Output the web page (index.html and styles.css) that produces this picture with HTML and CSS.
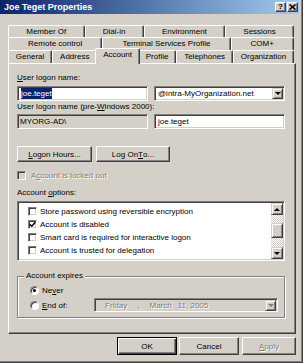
FILE: index.html
```html
<!DOCTYPE html>
<html lang="en">
<head>
    <meta charset="UTF-8" />
    <title>Joe Teget Properties</title>
    <link rel="stylesheet" href="styles.css">
</head>
<body>
<div class="window">
    <div class="titlebar">
        <span class="title">Joe Teget Properties</span>
        <div class="title-btns">
            <span class="tbtn">?</span>
            <span class="tbtn">
                <svg width="7" height="6" viewBox="0 0 7 6"><path d="M0.5 0.5 L6.5 5.5 M6.5 0.5 L0.5 5.5" stroke="#000" stroke-width="1.6"/></svg>
            </span>
        </div>
    </div>

    <div class="main">
        <div class="tabs">
            <div class="tab-row back">
                <div class="tab">Member Of</div>
                <div class="tab">Dial-in</div>
                <div class="tab">Environment</div>
                <div class="tab">Sessions</div>
            </div>
            <div class="tab-row">
                <div class="tab">Remote control</div>
                <div class="tab">Terminal Services Profile</div>
                <div class="tab">COM+</div>
            </div>
            <div class="tab-row">
                <div class="tab">General</div>
                <div class="tab">Address</div>
                <div class="tab selected">Account</div>
                <div class="tab">Profile</div>
                <div class="tab">Telephones</div>
                <div class="tab">Organization</div>
            </div>
        </div>

        <div class="panel">
            <div class="label"><u>U</u>ser logon name:</div>
            <div class="field-row">
                <div class="field"><span class="sel">joe.teget</span></div>
                <div class="field combo">
                    <span class="value">@intra-MyOrganization.net</span>
                    <span class="drop"><i class="arrow-down"></i></span>
                </div>
            </div>

            <div class="label label-2">User logon name (pre-<u>W</u>indows 2000):</div>
            <div class="field-row row-2">
                <div class="field readonly">MYORG-AD\</div>
                <div class="field">joe.teget</div>
            </div>

            <div class="button-row">
                <button class="btn hours"><u>L</u>ogon Hours...</button>
                <button class="btn logon">Log On <u>T</u>o...</button>
            </div>

            <div class="check-line disabled"><span class="checkbox"></span>A<u>c</u>count is locked out</div>

            <div class="label options-label">Account <u>o</u>ptions:</div>
            <div class="listbox">
                <div class="list-view">
                    <div class="item"><span class="checkbox"></span>Store password using reversible encryption</div>
                    <div class="item"><span class="checkbox"><svg width="7" height="7" viewBox="0 0 7 7"><path d="M0.8 3.2 L2.8 5.2 L6.3 1.2" fill="none" stroke="#000" stroke-width="1.5"/></svg></span>Account is disabled</div>
                    <div class="item"><span class="checkbox"></span>Smart card is required for interactive logon</div>
                    <div class="item"><span class="checkbox"></span>Account is trusted for delegation</div>
                </div>
                <div class="scrollbar">
                    <span class="sb-btn"><i class="arrow-up"></i></span>
                    <div class="sb-track"><span class="sb-thumb"></span></div>
                    <span class="sb-btn"><i class="arrow-down"></i></span>
                </div>
            </div>

            <fieldset class="group">
                <legend>Account expires</legend>
                <div class="radio-line"><span class="radio checked"></span>Ne<u>v</u>er</div>
                <div class="radio-line end-line">
                    <span class="radio"></span><u>E</u>nd of:
                    <div class="datepicker">
                        <span class="day">Friday</span>
                        <span class="comma">,</span>
                        <span class="month">March</span>
                        <span class="date">11, 2005</span>
                        <span class="drop"><i class="arrow-down"></i></span>
                    </div>
                </div>
            </fieldset>
        </div>

        <div class="footer">
            <button class="btn default ok">OK</button>
            <button class="btn cancel">Cancel</button>
            <button class="btn apply" disabled><u>A</u>pply</button>
        </div>
    </div>
</div>
</body>
</html>
```

FILE: styles.css
```css
* {
    box-sizing: border-box;
}

body {
    margin: 0;
    font-family: "Liberation Sans", Arial, sans-serif;
    font-size: 8px;
    color: #000;
    background-color: #d4d0c8;
}

u {
    text-underline-offset: 1px;
}

.window {
    width: 303px;
    height: 363px;
    display: flex;
    flex-direction: column;
    background-color: #d4d0c8;
    border-right: 1px solid #404040;
    border-bottom: 1px solid #404040;
    box-shadow: inset -1px -1px #808080;
    padding: 0 3px 3px 0;
}

/* title bar */
.titlebar {
    height: 14px;
    display: flex;
    align-items: center;
    justify-content: space-between;
    padding: 0 1px 0 4px;
    background: linear-gradient(to right, #0a246a, #a6caf0);
}

.title {
    color: white;
    font-weight: bold;
    font-size: 9px;
}

.title-btns {
    display: flex;
    gap: 1px;
}

.tbtn {
    width: 11px;
    height: 10px;
    display: flex;
    align-items: center;
    justify-content: center;
    font-weight: bold;
    font-size: 8px;
    line-height: 1;
    background-color: #d4d0c8;
    border: 1px solid;
    border-color: #fff #404040 #404040 #fff;
    box-shadow: inset -1px -1px #808080;
}

/* tabs */
.main {
    flex: 1;
    display: flex;
    flex-direction: column;
    padding: 11px 3px 0 8px;
}

.tabs {
    width: 286px;
}

.tab-row {
    display: flex;
    height: 13px;
}

.tab-row.back {
    height: 12px;
}

.tab {
    flex: 1 1 auto;
    padding: 0 5px;
    text-align: center;
    white-space: nowrap;
    line-height: 11px;
    border-top: 1px solid #fff;
    border-left: 1px solid #fff;
    border-right: 1px solid #404040;
    border-radius: 2px 2px 0 0;
    box-shadow: inset -1px 0 #808080;
    background-color: #d4d0c8;
}

.tab.selected {
    position: relative;
    z-index: 1;
    margin: -2px -2px -1px;
    line-height: 12px;
}

/* main panel */
.panel {
    height: 271px;
    border: 1px solid;
    border-color: #fff #404040 #404040 #fff;
    box-shadow: inset -1px -1px #808080;
    padding: 9px 10px 0 8px;
}

.label {
    height: 10px;
    line-height: 10px;
    white-space: nowrap;
}

.label-2 {
    margin-top: 1px;
}

.field-row {
    display: flex;
    justify-content: space-between;
    margin-top: 3px;
}

.field-row.row-2 {
    margin-top: 2px;
}

.field {
    width: 131px;
    height: 15px;
    display: flex;
    align-items: center;
    padding: 0 3px;
    background-color: #fff;
    border: 1px solid;
    border-color: #808080 #fff #fff #808080;
    box-shadow: inset 1px 1px #404040, inset -1px -1px #d4d0c8;
    white-space: nowrap;
    overflow: hidden;
}

.field.readonly {
    background-color: #d4d0c8;
    padding-left: 2px;
}

.sel {
    background-color: #0a246a;
    color: white;
    padding: 1px 0 1px 0;
    line-height: 9px;
}

.combo {
    padding-right: 1px;
}

.combo .value {
    flex: 1;
}

.drop {
    width: 11px;
    height: 11px;
    display: flex;
    align-items: center;
    justify-content: center;
    background-color: #d4d0c8;
    border: 1px solid;
    border-color: #d4d0c8 #404040 #404040 #d4d0c8;
    box-shadow: inset 1px 1px #fff, inset -1px -1px #808080;
}

.arrow-down {
    width: 0;
    height: 0;
    border-left: 3px solid transparent;
    border-right: 3px solid transparent;
    border-top: 3px solid #000;
}

.arrow-up {
    width: 0;
    height: 0;
    border-left: 3px solid transparent;
    border-right: 3px solid transparent;
    border-bottom: 3px solid #000;
}

/* buttons */
.btn {
    height: 16px;
    padding: 0;
    font: inherit;
    color: #000;
    display: flex;
    align-items: center;
    justify-content: center;
    background-color: #d4d0c8;
    border: 1px solid;
    border-color: #fff #404040 #404040 #fff;
    box-shadow: inset -1px -1px #808080;
}

.button-row {
    display: flex;
    gap: 4px;
    margin-top: 17px;
}

.hours {
    width: 75px;
}

.logon {
    width: 74px;
}

/* checkboxes */
.check-line {
    display: flex;
    align-items: center;
    height: 10px;
    margin-top: 8px;
}

.checkbox {
    width: 9px;
    height: 9px;
    flex: none;
    display: flex;
    align-items: center;
    justify-content: center;
    margin-right: 5px;
    background-color: #fff;
    border: 1px solid;
    border-color: #808080 #fff #fff #808080;
    box-shadow: inset 1px 1px #404040, inset -1px -1px #d4d0c8;
}

.check-line.disabled {
    color: #808080;
    text-shadow: 1px 1px #fff;
}

.check-line.disabled .checkbox {
    background-color: #d4d0c8;
}

.options-label {
    margin-top: 8px;
}

/* list of options */
.listbox {
    height: 60px;
    margin-top: 3px;
    display: flex;
    background-color: #fff;
    border: 1px solid;
    border-color: #808080 #fff #fff #808080;
    box-shadow: inset 1px 1px #404040, inset -1px -1px #d4d0c8;
    padding: 1px;
}

.list-view {
    flex: 1;
    overflow: hidden;
    padding-top: 2px;
}

.item {
    height: 13px;
    display: flex;
    align-items: center;
    padding-left: 9px;
    white-space: nowrap;
}

.item .checkbox {
    margin-right: 3px;
}

.scrollbar {
    width: 12px;
    display: flex;
    flex-direction: column;
}

.sb-btn {
    height: 12px;
    display: flex;
    align-items: center;
    justify-content: center;
    background-color: #d4d0c8;
    border: 1px solid;
    border-color: #d4d0c8 #404040 #404040 #d4d0c8;
    box-shadow: inset 1px 1px #fff, inset -1px -1px #808080;
}

.sb-track {
    flex: 1;
    background: repeating-conic-gradient(#fff 0 25%, #d4d0c8 0 50%) 0 0 / 2px 2px;
}

.sb-thumb {
    display: block;
    height: 15px;
    margin-top: 8px;
    background-color: #d4d0c8;
    border: 1px solid;
    border-color: #d4d0c8 #404040 #404040 #d4d0c8;
    box-shadow: inset 1px 1px #fff, inset -1px -1px #808080;
}

/* account expires */
.group {
    margin: 10px 0 0;
    padding: 4px 6px 5px 12px;
    min-width: 0;
    border: 1px solid #808080;
    box-shadow: inset 1px 1px #fff, 1px 1px #fff;
}

.group legend {
    margin-left: -6px;
    padding: 0 2px;
    line-height: 10px;
    background-color: #d4d0c8;
}

.radio-line {
    height: 10px;
    display: flex;
    align-items: center;
}

.radio-line.end-line {
    height: 14px;
    margin-top: 3px;
}

.radio {
    width: 9px;
    height: 9px;
    flex: none;
    margin-right: 3px;
    display: flex;
    align-items: center;
    justify-content: center;
    border-radius: 50%;
    background-color: #fff;
    border: 1px solid;
    border-color: #808080 #fff #fff #808080;
    box-shadow: inset 1px 1px #404040;
}

.radio.checked::after {
    content: "";
    width: 3px;
    height: 3px;
    border-radius: 50%;
    background-color: #000;
}

.datepicker {
    margin-left: auto;
    width: 184px;
    height: 14px;
    display: flex;
    align-items: center;
    padding: 0 1px 0 10px;
    color: #808080;
    text-shadow: 1px 1px #fff;
    background-color: #d4d0c8;
    border: 1px solid;
    border-color: #808080 #fff #fff #808080;
    box-shadow: inset 1px 1px #404040, inset -1px -1px #d4d0c8;
    white-space: nowrap;
}

.datepicker .comma {
    margin-left: 10px;
}

.datepicker .month {
    margin-left: 10px;
}

.datepicker .date {
    margin-left: 6px;
    flex: 1;
}

.datepicker .arrow-down {
    border-top-color: #808080;
}

/* dialog buttons */
.footer {
    display: flex;
    justify-content: flex-end;
    gap: 2px;
    margin-top: 3px;
}

.footer .btn {
    height: 18px;
    width: 60px;
}

.footer .apply {
    width: 54px;
    margin-left: 1px;
    color: #808080;
    text-shadow: 1px 1px #fff;
}

.btn.default {
    border-color: #000;
    box-shadow: inset 1px 1px #fff, inset -1px -1px #404040, inset -2px -2px #808080;
}
```
